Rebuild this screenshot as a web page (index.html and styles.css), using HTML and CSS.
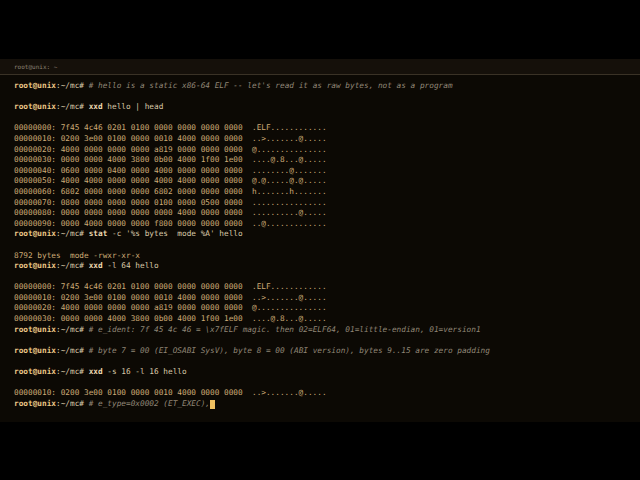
FILE: index.html
```html
<!DOCTYPE html>
<html>
<head>
<meta charset="utf-8">
<link rel="stylesheet" href="styles.css">
</head>
<body>
<div class="top"></div>
<div class="win">
  <div class="bar">root@unix: ~</div>
  <div class="term">
<div class="ln"><span class="u">root@unix</span><span class="p">:~/mc#</span> <span class="c"># hello is a static x86-64 ELF -- let's read it as raw bytes, not as a program</span></div>
<div class="ln"> </div>
<div class="ln"><span class="u">root@unix</span><span class="p">:~/mc#</span> <span class="k">xxd</span> <span class="a">hello | head</span></div>
<div class="ln"> </div>
<div class="ln o">00000000: 7f45 4c46 0201 0100 0000 0000 0000 0000  .ELF............</div>
<div class="ln o">00000010: 0200 3e00 0100 0000 0010 4000 0000 0000  ..&gt;.......@.....</div>
<div class="ln o">00000020: 4000 0000 0000 0000 a819 0000 0000 0000  @...............</div>
<div class="ln o">00000030: 0000 0000 4000 3800 0b00 4000 1f00 1e00  ....@.8...@.....</div>
<div class="ln o">00000040: 0600 0000 0400 0000 4000 0000 0000 0000  ........@.......</div>
<div class="ln o">00000050: 4000 4000 0000 0000 4000 4000 0000 0000  @.@.....@.@.....</div>
<div class="ln o">00000060: 6802 0000 0000 0000 6802 0000 0000 0000  h.......h.......</div>
<div class="ln o">00000070: 0800 0000 0000 0000 0100 0000 0500 0000  ................</div>
<div class="ln o">00000080: 0000 0000 0000 0000 0000 4000 0000 0000  ..........@.....</div>
<div class="ln o">00000090: 0000 4000 0000 0000 f800 0000 0000 0000  ..@.............</div>
<div class="ln"><span class="u">root@unix</span><span class="p">:~/mc#</span> <span class="k">stat</span> <span class="a">-c '%s bytes  mode %A' hello</span></div>
<div class="ln"> </div>
<div class="ln o">8792 bytes  mode -rwxr-xr-x</div>
<div class="ln"><span class="u">root@unix</span><span class="p">:~/mc#</span> <span class="k">xxd</span> <span class="a">-l 64 hello</span></div>
<div class="ln"> </div>
<div class="ln o">00000000: 7f45 4c46 0201 0100 0000 0000 0000 0000  .ELF............</div>
<div class="ln o">00000010: 0200 3e00 0100 0000 0010 4000 0000 0000  ..&gt;.......@.....</div>
<div class="ln o">00000020: 4000 0000 0000 0000 a819 0000 0000 0000  @...............</div>
<div class="ln o">00000030: 0000 0000 4000 3800 0b00 4000 1f00 1e00  ....@.8...@.....</div>
<div class="ln"><span class="u">root@unix</span><span class="p">:~/mc#</span> <span class="c"># e_ident: 7f 45 4c 46 = \x7fELF magic. then 02=ELF64, 01=little-endian, 01=version1</span></div>
<div class="ln"> </div>
<div class="ln"><span class="u">root@unix</span><span class="p">:~/mc#</span> <span class="c"># byte 7 = 00 (EI_OSABI SysV), byte 8 = 00 (ABI version), bytes 9..15 are zero padding</span></div>
<div class="ln"> </div>
<div class="ln"><span class="u">root@unix</span><span class="p">:~/mc#</span> <span class="k">xxd</span> <span class="a">-s 16 -l 16 hello</span></div>
<div class="ln"> </div>
<div class="ln o">00000010: 0200 3e00 0100 0000 0010 4000 0000 0000  ..&gt;.......@.....</div>
<div class="ln"><span class="u">root@unix</span><span class="p">:~/mc#</span> <span class="c"># e_type=0x0002 (ET_EXEC),</span><span class="cur"> </span></div>
  </div>
</div>
</body>
</html>
```
FILE: styles.css
```css
html, body {
  margin: 0;
  padding: 0;
  background: #000;
  width: 640px;
  height: 480px;
  overflow: hidden;
}
.top {
  height: 59px;
}
.win {
  background: #0c0904;
}
.bar {
  height: 16px;
  box-sizing: border-box;
  background: #15100a;
  border-bottom: 1px solid #3a3226;
  color: #8c8272;
  font-family: "DejaVu Sans Mono", monospace;
  font-size: 6px;
  line-height: 15px;
  padding-left: 14px;
}
.term {
  padding: 6px 14px 13px 14px;
  font-family: "DejaVu Sans Mono", monospace;
  font-size: 7.75px;
  line-height: 10.6px;
  color: #d8c8a8;
}
.ln {
  height: 10.6px;
  white-space: pre;
}
.u {
  color: #ecc887;
  font-weight: bold;
}
.p {
  color: #d8c8a8;
}
.k {
  color: #ecd9b0;
  font-weight: bold;
}
.a {
  color: #d8c8a8;
}
.c {
  color: #908676;
  font-style: italic;
}
.o {
  color: #ccab76;
}
.cur {
  display: inline-block;
  width: 5px;
  height: 9px;
  background: #f0c060;
  vertical-align: -1px;
}
```
